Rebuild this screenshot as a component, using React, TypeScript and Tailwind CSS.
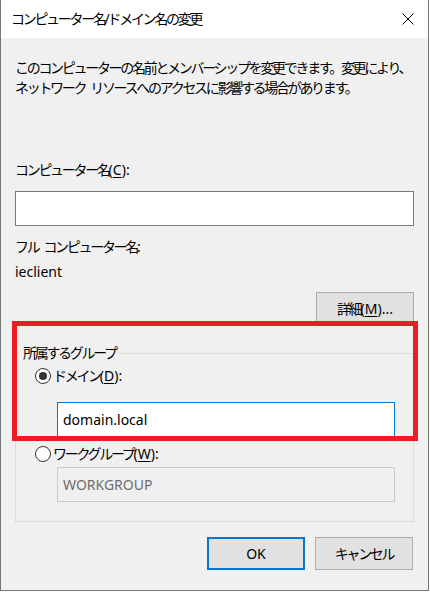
const ui = "[font-family:'Noto_Sans','Noto_Sans_CJK_JP',sans-serif]";

// Japanese runs: condensed to the narrow kana of the system UI font
function J({ children }: { children: React.ReactNode }) {
  return <span className="text-[14px] tracking-[-2.3px]">{children}</span>;
}

function Key({ k }: { k: string }) {
  return (
    <>
      (<u className="underline-offset-2">{k}</u>)
    </>
  );
}

function Radio({ checked, label, hotkey }: { checked?: boolean; label: string; hotkey: string }) {
  return (
    <div className="flex items-center h-[20px]">
      <span className="w-[16px] h-[16px] rounded-full border border-[#333] bg-white flex items-center justify-center">
        {checked && <span className="w-[8px] h-[8px] rounded-full bg-[#333]" />}
      </span>
      <span className="ml-[2px]">
        <J>{label}</J>
        <Key k={hotkey} />:
      </span>
    </div>
  );
}

function Btn({ children, primary }: { children: React.ReactNode; primary?: boolean }) {
  return (
    <button
      className={
        primary
          ? "w-[98px] h-[33px] bg-[#e1e1e1] border-2 border-[#0078d7] text-black"
          : "w-[98px] h-[33px] bg-[#e1e1e1] border border-[#adadad] text-black"
      }
    >
      {children}
    </button>
  );
}

export default function App() {
  return (
    <div className={`${ui} relative w-[429px] h-[591px] bg-[#f0f0f0] border-x border-b border-[#777] text-[14px] leading-[20px] text-black flex flex-col whitespace-nowrap`}>
      {/* title bar */}
      <div className="h-[38px] shrink-0 bg-white flex items-center justify-between pl-[10px] pr-[14px]">
        <span>
          <J>コンピューター名/ドメイン名の変更</J>
        </span>
        <svg width="12" height="12" viewBox="0 0 12 12">
          <path d="M0.5 0.5 L11.5 11.5 M11.5 0.5 L0.5 11.5" stroke="#000" strokeWidth="1" />
        </svg>
      </div>

      <div className="flex flex-col px-[14px]">
        <div className="mt-[20px] h-[20px]">
          <J>このコンピューターの名前とメンバーシップを変更できます。変更により、</J>
        </div>
        <div className="h-[20px]">
          <J>ネットワーク</J>
          <span className="ml-[5px]" />
          <J>リソースへのアクセスに影響する場合があります。</J>
        </div>

        <label className="mt-[62px] h-[20px]">
          <J>コンピューター名</J>
          <Key k="C" />:
        </label>
        <div className="mt-[11px] h-[35px] bg-white border border-[#7a7a7a]" />

        <div className="mt-[11px] h-[20px]">
          <J>フル</J>
          <span className="ml-[5px]" />
          <J>コンピューター名</J>:
        </div>
        <div className="mt-[5px] h-[20px]">ieclient</div>

        <div className="mt-[10px] self-end">
          <Btn>
            <J>詳細</J>
            <Key k="M" />...
          </Btn>
        </div>

        <fieldset className="mt-[18px] border border-[#dcdcdc] pb-[19px]">
          <legend className="ml-[4px] px-[3px] h-[20px]">
            <J>所属するグループ</J>
          </legend>
          <div className="pl-[19px] flex flex-col">
            <div className="mt-[3px]">
              <Radio checked label="ドメイン" hotkey="D" />
            </div>
            <div className="mt-[16px] ml-[22px] w-[338px] h-[35px] bg-white border border-[#0078d7] flex items-center px-[5px]">
              domain.local
            </div>
            <div className="mt-[7px]">
              <Radio label="ワークグループ" hotkey="W" />
            </div>
            <div className="mt-[3px] ml-[22px] w-[338px] h-[35px] border border-[#cccccc] flex items-center px-[5px] text-[#6d6d6d]">
              WORKGROUP
            </div>
          </div>
        </fieldset>

        <div className="mt-[15px] flex justify-end gap-[10px] pr-[1px]">
          <Btn primary>OK</Btn>
          <Btn>
            <J>キャンセル</J>
          </Btn>
        </div>
      </div>

      {/* annotation frame */}
      <div className="absolute left-[11px] top-[321px] w-[406px] h-[120px] border-[5px] border-[#ed1c24] pointer-events-none" />
    </div>
  );
}
